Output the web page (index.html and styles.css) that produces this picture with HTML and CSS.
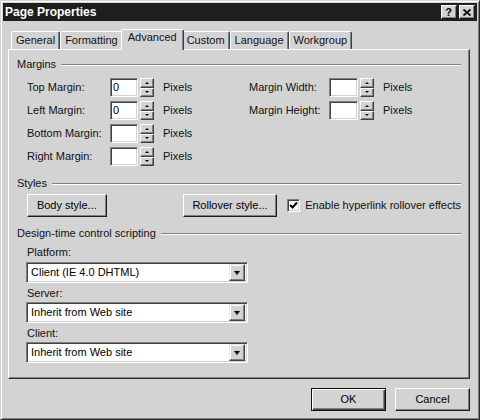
FILE: index.html
```html
<!DOCTYPE html>
<html>
<head>
<meta charset="utf-8">
<title>Page Properties</title>
<link rel="stylesheet" href="styles.css">
</head>
<body>
<div class="window">
  <div class="titlebar">
    <span class="title">Page Properties</span>
    <div class="tb-buttons">
      <span class="tb-btn help">?</span>
      <span class="tb-btn close"><svg width="8" height="7" viewBox="0 0 8 7"><path d="M0.5 0.5 L7.5 6.5 M7.5 0.5 L0.5 6.5" stroke="#000" stroke-width="1.7" fill="none"/></svg></span>
    </div>
  </div>
  <div class="content">
    <div class="tabs">
      <div class="tab first">General</div>
      <div class="tab">Formatting</div>
      <div class="tab active">Advanced</div>
      <div class="tab">Custom</div>
      <div class="tab">Language</div>
      <div class="tab">Workgroup</div>
    </div>
    <div class="panel">
      <div class="group-head"><span>Margins</span><i class="groove"></i></div>
      <div class="margins">
        <div class="mcol mcol-left">
          <div class="mrow"><span class="mlabel">Top Margin:</span><span class="field">0</span><span class="spin"><b class="up"></b><b class="down"></b></span><span class="unit">Pixels</span></div>
          <div class="mrow"><span class="mlabel">Left Margin:</span><span class="field">0</span><span class="spin"><b class="up"></b><b class="down"></b></span><span class="unit">Pixels</span></div>
          <div class="mrow"><span class="mlabel">Bottom Margin:</span><span class="field"></span><span class="spin"><b class="up"></b><b class="down"></b></span><span class="unit">Pixels</span></div>
          <div class="mrow"><span class="mlabel">Right Margin:</span><span class="field"></span><span class="spin"><b class="up"></b><b class="down"></b></span><span class="unit">Pixels</span></div>
        </div>
        <div class="mcol mcol-right">
          <div class="mrow"><span class="mlabel">Margin Width:</span><span class="field wide"></span><span class="spin"><b class="up"></b><b class="down"></b></span><span class="unit">Pixels</span></div>
          <div class="mrow"><span class="mlabel">Margin Height:</span><span class="field wide"></span><span class="spin"><b class="up"></b><b class="down"></b></span><span class="unit">Pixels</span></div>
        </div>
      </div>

      <div class="group-head styles-head"><span>Styles</span><i class="groove"></i></div>
      <div class="style-row">
        <span class="btn body-btn">Body style...</span>
        <span class="btn roll-btn">Rollover style...</span>
        <span class="check"><svg width="9" height="9" viewBox="0 0 9 9"><path d="M1 4 L3.5 6.5 L8 1.5" stroke="#000" stroke-width="2" fill="none"/></svg></span>
        <span class="check-label">Enable hyperlink rollover effects</span>
      </div>

      <div class="group-head dtc-head"><span>Design-time control scripting</span><i class="groove"></i></div>
      <div class="selects">
        <div class="sel-label first-label">Platform:</div>
        <div class="select"><span class="sel-text">Client (IE 4.0 DHTML)</span><span class="sel-btn"><i class="tri"></i></span></div>
        <div class="sel-label">Server:</div>
        <div class="select"><span class="sel-text">Inherit from Web site</span><span class="sel-btn"><i class="tri"></i></span></div>
        <div class="sel-label">Client:</div>
        <div class="select"><span class="sel-text">Inherit from Web site</span><span class="sel-btn"><i class="tri"></i></span></div>
      </div>
    </div>
    <div class="footer">
      <span class="btn dlg-btn default">OK</span>
      <span class="btn dlg-btn">Cancel</span>
    </div>
  </div>
</div>
</body>
</html>
```

FILE: styles.css
```css
* { box-sizing: border-box; }

html, body {
  margin: 0;
  padding: 0;
  background: #d3d3d3;
}

body {
  font-family: "Liberation Sans", Arial, sans-serif;
  font-size: 11px;
  line-height: 13px;
  color: #111;
}

.window {
  width: 480px;
  height: 420px;
  background: #d3d3d3;
  border: 1px solid;
  border-color: #d3d3d3 #2a2a2a #2a2a2a #d3d3d3;
  box-shadow: inset 1px 1px #ffffff, inset -1px -1px #808080;
  padding: 2px;
  display: flex;
  flex-direction: column;
}

/* Title bar */
.titlebar {
  height: 18px;
  background: #1e1e1e;
  display: flex;
  align-items: center;
  justify-content: space-between;
  padding: 0 2px 0 2px;
}

.title {
  color: #fff;
  font-weight: bold;
  font-size: 12px;
  letter-spacing: 0;
}

.tb-buttons {
  display: flex;
  gap: 2px;
}

.tb-btn {
  width: 16px;
  height: 14px;
  background: #d3d3d3;
  border: 1px solid;
  border-color: #fff #1a1a1a #1a1a1a #fff;
  box-shadow: inset -1px -1px #808080;
  display: flex;
  align-items: center;
  justify-content: center;
  color: #000;
}

.help {
  font-weight: bold;
  font-size: 11px;
  line-height: 12px;
  padding-right: 1px;
}

/* Content */
.content {
  flex: 1;
  padding: 7px 7px 0 5px;
  display: flex;
  flex-direction: column;
}

.tabs {
  display: flex;
  align-items: flex-end;
  height: 21px;
  padding-left: 3px;
  position: relative;
  z-index: 1;
}

.tab {
  height: 18px;
  padding: 2px 4px 0 4px;
  border-top: 1px solid #fff;
  border-left: 1px solid #fff;
  border-right: 1px solid #404040;
  box-shadow: inset -1px 0 #808080;
  border-top-left-radius: 2px;
  border-top-right-radius: 2px;
  background: #d3d3d3;
  white-space: nowrap;
  margin-bottom: 0;
}

.tab.active {
  height: 21px;
  margin: 0 -2px -1px -2px;
  padding: 1px 6px 0 6px;
  position: relative;
  z-index: 2;
}

/* Panel */
.panel {
  height: 330px;
  border: 1px solid;
  border-color: #fff #303030 #303030 #fff;
  box-shadow: inset -1px -1px #808080;
  padding: 8px 8px 0 8px;
}

.group-head {
  display: flex;
  align-items: center;
  height: 13px;
}

.group-head span {
  white-space: nowrap;
}

.groove {
  flex: 1;
  height: 2px;
  margin-left: 5px;
  border-top: 1px solid #808080;
  border-bottom: 1px solid #fff;
}

.margins {
  display: flex;
  margin-top: 7px;
  padding-left: 10px;
}

.mcol {
  display: flex;
  flex-direction: column;
  gap: 4px;
}

.mcol-left {
  width: 222px;
}

.mrow {
  display: flex;
  align-items: center;
  height: 19px;
}

.mcol-left .mlabel { width: 83px; }
.mcol-right .mlabel { width: 80px; }

.field {
  width: 28px;
  height: 19px;
  background: #fff;
  border: 1px solid;
  border-color: #808080 #fff #fff #808080;
  box-shadow: inset 1px 1px #404040, inset -1px -1px #d3d3d3;
  padding: 2px 0 0 2px;
  color: #000;
}

.field.wide { width: 29px; }

.spin {
  margin-left: 2px;
  width: 14px;
  height: 19px;
  display: flex;
  flex-direction: column;
}

.spin b {
  flex: 1;
  background: #d3d3d3;
  border: 1px solid;
  border-color: #fff #404040 #404040 #fff;
  box-shadow: inset -1px -1px #808080;
  display: flex;
  align-items: center;
  justify-content: center;
}

.spin b::after {
  content: "";
  width: 0;
  height: 0;
  border-left: 2px solid transparent;
  border-right: 2px solid transparent;
}

.spin .up::after { border-bottom: 2px solid #000; }
.spin .down::after { border-top: 2px solid #000; }

.unit {
  margin-left: 9px;
}

/* Styles */
.styles-head {
  margin-top: 11px;
}

.style-row {
  display: flex;
  align-items: center;
  margin-top: 4px;
  height: 23px;
}

.btn {
  height: 23px;
  background: #d3d3d3;
  border: 1px solid;
  border-color: #fff #1e1e1e #1e1e1e #fff;
  box-shadow: inset -1px -1px #808080;
  display: flex;
  align-items: center;
  justify-content: center;
  color: #000;
  white-space: nowrap;
}

.body-btn {
  margin-left: 10px;
  width: 80px;
}

.roll-btn {
  margin-left: 76px;
  width: 95px;
}

.check {
  margin-left: 10px;
  width: 13px;
  height: 13px;
  background: #fff;
  border: 1px solid;
  border-color: #808080 #fff #fff #808080;
  box-shadow: inset 1px 1px #404040, inset -1px -1px #d3d3d3;
  display: flex;
  align-items: center;
  justify-content: center;
}

.check-label {
  margin-left: 5px;
  white-space: nowrap;
}

/* Design-time */
.dtc-head {
  margin-top: 10px;
}

.selects {
  padding-left: 9px;
}

.sel-label {
  margin-top: 4px;
  padding-left: 1px;
  height: 13px;
}

.sel-label.first-label {
  margin-top: 6px;
}

.select {
  margin-top: 2px;
  width: 222px;
  height: 21px;
  background: #fff;
  border: 1px solid;
  border-color: #808080 #fff #fff #808080;
  box-shadow: inset 1px 1px #404040, inset -1px -1px #d3d3d3;
  padding: 2px;
  display: flex;
  align-items: center;
}

.selects .sel-label.first-label + .select {
  margin-top: 3px;
}

.sel-text {
  flex: 1;
  padding-left: 2px;
  color: #000;
}

.sel-btn {
  width: 16px;
  height: 17px;
  background: #d3d3d3;
  border: 1px solid;
  border-color: #e8e8e8 #404040 #404040 #e8e8e8;
  box-shadow: inset -1px -1px #808080, inset 1px 1px #fff;
  display: flex;
  align-items: center;
  justify-content: center;
}

.tri {
  width: 0;
  height: 0;
  border-left: 3.5px solid transparent;
  border-right: 3.5px solid transparent;
  border-top: 4px solid #000;
  margin-top: 1px;
}

/* Footer */
.footer {
  display: flex;
  justify-content: flex-end;
  gap: 9px;
  margin-top: 9px;
}

.dlg-btn {
  width: 75px;
}

.dlg-btn.default {
  border-color: #111;
  box-shadow: inset 1px 1px #fff, inset -1px -1px #404040, inset -2px -2px #808080;
}
```
